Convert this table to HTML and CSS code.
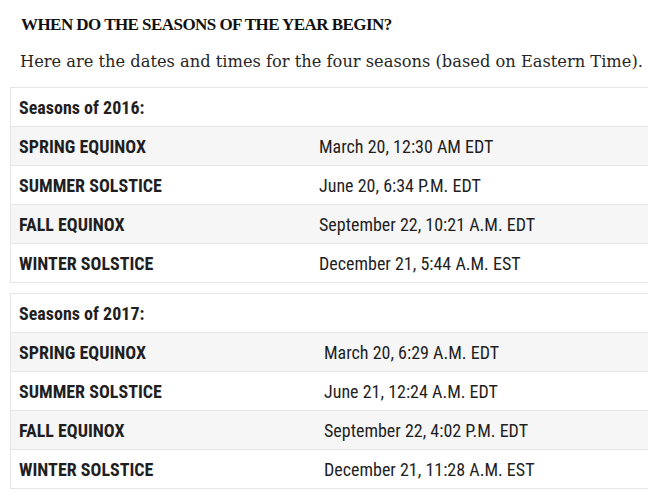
FILE: index.html
```html
<!DOCTYPE html>
<html lang="en">
<head>
<meta charset="utf-8">
<title>When do the seasons of the year begin?</title>
<link rel="stylesheet" href="styles.css">
</head>
<body>
<div class="page">
  <h2 class="title">WHEN DO THE SEASONS OF THE YEAR BEGIN?</h2>
  <p class="intro">Here are the dates and times for the four seasons (based on Eastern Time).</p>

  <div class="season-table y2016">
    <div class="row head"><div class="cell">Seasons of 2016:</div></div>
    <div class="row shade"><div class="cell name">SPRING EQUINOX</div><div class="cell">March 20, 12:30 AM EDT</div></div>
    <div class="row"><div class="cell name">SUMMER SOLSTICE</div><div class="cell">June 20, 6:34 P.M. EDT</div></div>
    <div class="row shade"><div class="cell name">FALL EQUINOX</div><div class="cell">September 22, 10:21 A.M. EDT</div></div>
    <div class="row"><div class="cell name">WINTER SOLSTICE</div><div class="cell">December 21, 5:44 A.M. EST</div></div>
  </div>

  <div class="season-table y2017">
    <div class="row head"><div class="cell">Seasons of 2017:</div></div>
    <div class="row shade"><div class="cell name">SPRING EQUINOX</div><div class="cell">March 20, 6:29 A.M. EDT</div></div>
    <div class="row"><div class="cell name">SUMMER SOLSTICE</div><div class="cell">June 21, 12:24 A.M. EDT</div></div>
    <div class="row shade"><div class="cell name">FALL EQUINOX</div><div class="cell">September 22, 4:02 P.M. EDT</div></div>
    <div class="row"><div class="cell name">WINTER SOLSTICE</div><div class="cell">December 21, 11:28 A.M. EST</div></div>
  </div>
</div>
</body>
</html>
```
FILE: styles.css
```css
html, body {
  margin: 0;
  padding: 0;
  background: #ffffff;
}

.page {
  width: 648px;
  overflow: hidden;
  padding-top: 13px;
  color: #1c1c1c;
}

.title {
  margin: 0;
  padding-left: 21px;
  font-family: "Liberation Serif", "Times New Roman", serif;
  font-weight: bold;
  font-size: 17px;
  letter-spacing: -0.55px;
  line-height: 24px;
  color: #111111;
  white-space: nowrap;
}

.intro {
  margin: 11px 0 11px;
  padding-left: 20px;
  font-family: "DejaVu Serif", "Liberation Serif", serif;
  font-size: 16.25px;
  line-height: 28px;
  color: #262626;
  white-space: nowrap;
}

.season-table {
  margin-left: 10px;
  width: 640px;
  border: 1px solid #e6e6e6;
  font-family: "Roboto Condensed", Roboto, sans-serif;
  font-stretch: condensed;
  font-size: 18px;
  color: #1f1f1f;
}

.season-table + .season-table {
  margin-top: 10px;
}

.row {
  display: grid;
  height: 38px;
  align-items: center;
  background: #ffffff;
}

.row + .row {
  border-top: 1px solid #e6e6e6;
}

.row.shade {
  background: #f6f6f6;
}

.y2016 .row {
  grid-template-columns: 300px 1fr;
}

.y2017 .row {
  grid-template-columns: 305px 1fr;
}

.row.head {
  grid-template-columns: 1fr;
  font-weight: bold;
}

.cell {
  padding: 0 8px;
  white-space: nowrap;
}

.cell.name {
  font-weight: bold;
}
```
